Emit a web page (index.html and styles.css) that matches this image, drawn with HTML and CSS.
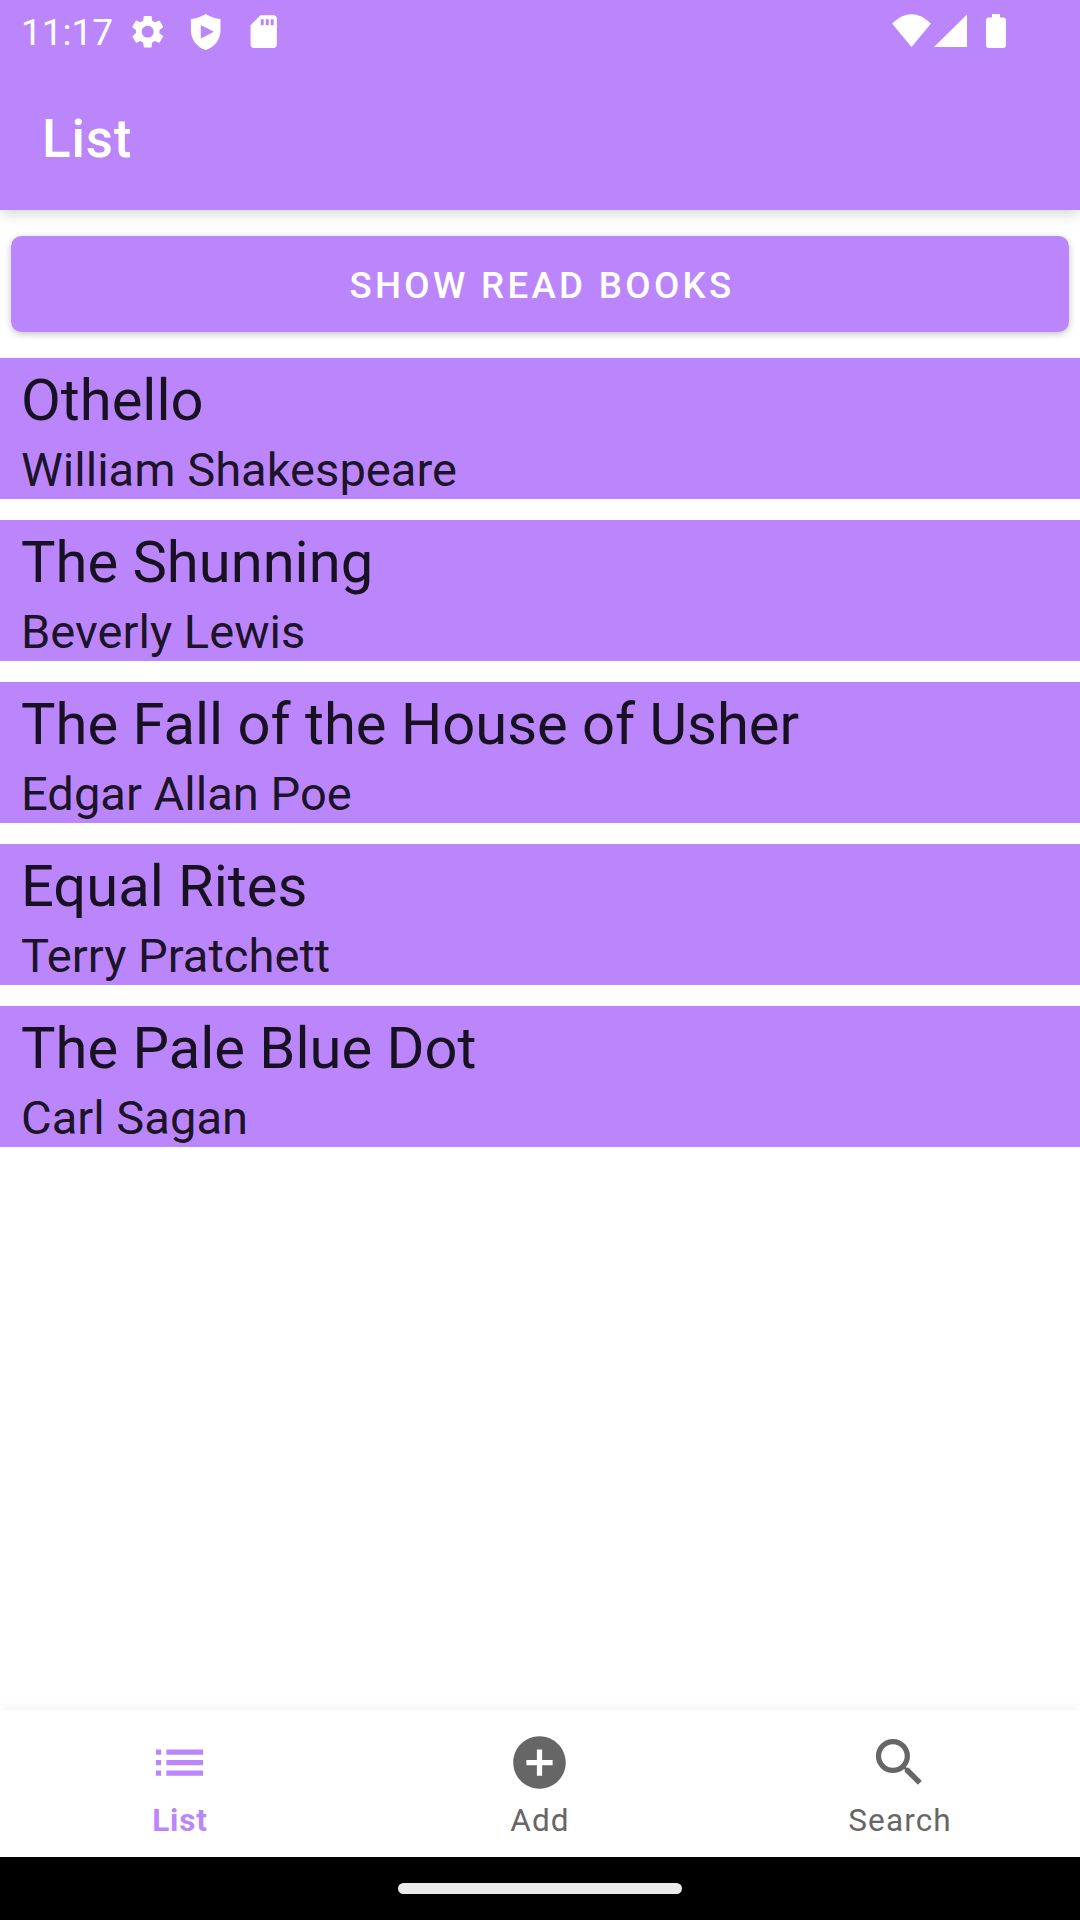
FILE: index.html
```html
<!DOCTYPE html>
<html lang="en">
<head>
<meta charset="utf-8">
<title>List</title>
<link rel="stylesheet" href="styles.css">
</head>
<body>
<div class="screen">
  <header class="top">
    <div class="status-bar">
      <span class="clock">11:17</span>
      <div class="notifications">
        <svg class="status-icon" viewBox="0 0 24 24"><path d="M19.14 12.94c.04-.3.06-.61.06-.94 0-.32-.02-.64-.07-.94l2.03-1.58c.18-.14.23-.41.12-.61l-1.92-3.32c-.12-.22-.37-.29-.59-.22l-2.39.96c-.5-.38-1.03-.7-1.62-.94l-.36-2.54c-.04-.24-.24-.41-.48-.41h-3.84c-.24 0-.43.17-.47.41l-.36 2.54c-.59.24-1.13.57-1.62.94l-2.39-.96c-.22-.08-.47 0-.59.22L2.74 8.87c-.12.21-.08.47.12.61l2.03 1.58c-.05.3-.09.63-.09.94s.02.64.07.94l-2.03 1.58c-.18.14-.23.41-.12.61l1.92 3.32c.12.22.37.29.59.22l2.39-.96c.5.38 1.03.7 1.62.94l.36 2.54c.05.24.24.41.48.41h3.84c.24 0 .44-.17.47-.41l.36-2.54c.59-.24 1.13-.56 1.62-.94l2.39.96c.22.08.47 0 .59-.22l1.92-3.32c.12-.22.07-.47-.12-.61l-2.01-1.58zM12 15.6c-1.98 0-3.6-1.62-3.6-3.6s1.62-3.6 3.6-3.6 3.6 1.62 3.6 3.6-1.62 3.6-3.6 3.6z"/></svg>
        <svg class="status-icon" viewBox="0 0 24 24"><path fill-rule="evenodd" d="M12 1.2C9.6 2.8 6.3 4 3 4.3v6.9c0 5.1 3.4 10.2 9 12 5.6-1.8 9-6.900 9-12V4.300C17.700 4 14.400 2.800 12 1.200zM9 7.900v8.200l8-4.100z"/></svg>
        <svg class="status-icon" viewBox="0 0 24 24"><path fill-rule="evenodd" d="M18 2h-8L4 8v12c0 1.100.9 2 2 2h12c1.100 0 2-.9 2-2V4c0-1.100-.9-2-2-2zM10.200 4.400h1.800v3.700h-1.800zM13.300 4.400h1.800v3.700h-1.800zM16.300 4.400h1.800v3.700h-1.800z"/></svg>
      </div>
      <svg class="system-icons" viewBox="0 0 116 36">
        <path d="M20.500 33 1 9.500Q20.500-9 40 9.500z"/>
        <path d="M76 .5V33H43z"/>
        <path d="M101 0h8v3.500h3q3 0 3 3V31q0 3-3 3H98q-3 0-3-3V6.500q0-3 3-3h3z"/>
      </svg>
    </div>
    <h1 class="title">List</h1>
  </header>
  <main class="content">
    <button class="filter" type="button">SHOW READ BOOKS</button>
    <ul class="books">
      <li class="book"><div class="name">Othello</div><div class="author">William Shakespeare</div></li>
      <li class="book"><div class="name">The Shunning</div><div class="author">Beverly Lewis</div></li>
      <li class="book"><div class="name">The Fall of the House of Usher</div><div class="author">Edgar Allan Poe</div></li>
      <li class="book"><div class="name">Equal Rites</div><div class="author">Terry Pratchett</div></li>
      <li class="book"><div class="name">The Pale Blue Dot</div><div class="author">Carl Sagan</div></li>
    </ul>
  </main>
  <nav class="tabs">
    <a class="tab active"><svg class="tab-icon" viewBox="0 0 24 24"><path d="M3 13h2v-2H3v2zm0 4h2v-2H3v2zm0-8h2V7H3v2zm4 4h14v-2H7v2zm0 4h14v-2H7v2zM7 7v2h14V7H7z"/></svg><span>List</span></a>
    <a class="tab"><svg class="tab-icon" viewBox="0 0 24 24"><path d="M12 2C6.480 2 2 6.480 2 12s4.480 10 10 10 10-4.480 10-10S17.520 2 12 2zm5 11h-4v4h-2v-4H7v-2h4V7h2v4h4v2z"/></svg><span>Add</span></a>
    <a class="tab"><svg class="tab-icon" viewBox="0 0 24 24"><path d="M15.500 14h-.79l-.28-.27C15.410 12.590 16 11.110 16 9.500 16 5.910 13.090 3 9.500 3S3 5.910 3 9.500 5.910 16 9.500 16c1.610 0 3.090-.59 4.230-1.570l.27.28v.79l5 4.990L20.490 19l-4.990-5zm-6 0C7.010 14 5 11.990 5 9.500S7.010 5 9.500 5 14 7.010 14 9.500 11.990 14 9.500 14z"/></svg><span>Search</span></a>
  </nav>
  <footer class="gesture-bar"><div class="handle"></div></footer>
</div>
</body>
</html>
```
FILE: styles.css
```css
* { box-sizing: border-box; }

body {
  margin: 0;
  background: #fff;
  font-family: Roboto, "Liberation Sans", sans-serif;
}

.screen {
  display: flex;
  flex-direction: column;
  width: 1080px;
  height: 1920px;
  overflow: hidden;
}

.top {
  height: 210px;
  background: #bb86fc;
  color: #fff;
  box-shadow: 0 3px 14px rgba(0, 0, 0, .18);
}

.status-bar {
  display: flex;
  align-items: flex-start;
  height: 63px;
  padding: 0 73px 0 21px;
  fill: #fff;
}

.clock {
  width: 107px;
  font-size: 37px;
  line-height: 66px;
  white-space: nowrap;
}

.notifications {
  display: flex;
  gap: 18.8px;
  padding-top: 12px;
}

.status-icon { width: 39.4px; height: 39.4px; }

.system-icons {
  width: 116px;
  height: 36px;
  margin: 14px 0 0 auto;
}

.title {
  margin: 0;
  padding: 3px 0 0 42px;
  font-size: 53px;
  font-weight: 500;
  line-height: 147px;
  letter-spacing: .8px;
}

.content {
  flex: 1;
  padding-top: 26px;
}

.filter {
  display: block;
  width: 1058px;
  height: 96px;
  margin: 0 11px 26px;
  padding: 2px 0 0 4px;
  border: 0;
  border-radius: 10.5px;
  background: #bb86fc;
  box-shadow: 0 2px 7px rgba(0, 0, 0, .24);
  color: #fff;
  font: 500 36.75px/95px Roboto, "Liberation Sans", sans-serif;
  letter-spacing: .0893em;
}

.books {
  display: flex;
  flex-direction: column;
  gap: 21px;
  margin: 0;
  padding: 0;
  list-style: none;
}

.book {
  height: 141px;
  padding: 4px 21px 0;
  background: #bb86fc;
  color: rgba(0, 0, 0, .87);
}

.name {
  font-size: 57.9px;
  line-height: 77px;
}

.author {
  font-size: 47.1px;
  line-height: 62px;
}

.tabs {
  display: grid;
  grid-template-columns: repeat(3, 1fr);
  height: 147px;
  background: #fff;
  box-shadow: 0 0 10px rgba(0, 0, 0, .08);
}

.tab {
  display: flex;
  flex-direction: column;
  align-items: center;
  padding-top: 21px;
  color: #666;
  fill: currentColor;
  font-size: 31.5px;
  line-height: 54px;
  letter-spacing: .035em;
}

.tab.active {
  color: #bb86fc;
  font-weight: 700;
  letter-spacing: .028em;
}

.tab-icon {
  width: 63px;
  height: 63px;
  margin-right: 2px;
}

.gesture-bar {
  height: 63px;
  padding-top: 26px;
  background: #000;
}

.handle {
  width: 284px;
  height: 11px;
  margin: 0 auto;
  border-radius: 6px;
  background: #ebebeb;
}
```
